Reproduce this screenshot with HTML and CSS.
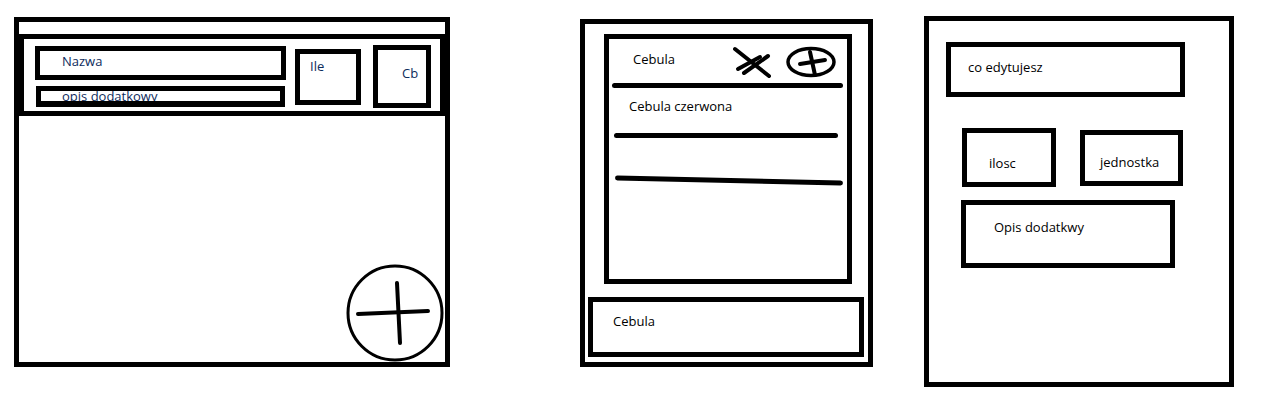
FILE: index.html
```html
<!DOCTYPE html>
<html lang="pl">
<head>
  <meta charset="UTF-8">
  <meta name="viewport" content="width=device-width, initial-scale=1.0">
  <title>Szkic - lista zakupow</title>
  <link rel="stylesheet" href="styles.css">
</head>
<body>
  <!-- Ekran 1: lista produktow -->
  <section class="panel panel-list">
    <div class="product-row">
      <div class="product-main">
        <div class="box field-name"><span class="label">Nazwa</span></div>
        <div class="box field-desc"><span class="label">opis dodatkowy</span></div>
      </div>
      <div class="box field-qty"><span class="label">Ile</span></div>
      <div class="box field-check"><span class="label">Cb</span></div>
    </div>

    <!-- Przycisk dodawania -->
    <svg class="fab" width="100" height="102" viewBox="0 0 100 102">
      <circle cx="50" cy="51" r="47" fill="none" stroke="#000" stroke-width="3"/>
      <path d="M13 52 L83 49" stroke="#000" stroke-width="4" stroke-linecap="round"/>
      <path d="M52 21 L55 81" stroke="#000" stroke-width="4" stroke-linecap="round"/>
    </svg>
  </section>

  <!-- Ekran 2: wybor produktu -->
  <section class="panel panel-pick">
    <div class="box pick-list">
      <div class="pick-head">
        <span class="label">Cebula</span>
        <svg class="head-icons" width="110" height="36" viewBox="0 0 110 36">
          <g stroke="#000" stroke-width="4" stroke-linecap="round" fill="none">
            <path d="M6 4 L40 31"/>
            <path d="M9 24 L31 12"/>
            <path d="M15 28 L39 11"/>
            <ellipse cx="82" cy="17" rx="23" ry="13.5" stroke-width="3.5"/>
            <path d="M71 19 L96 15"/>
            <path d="M81 7 L86 30"/>
          </g>
        </svg>
      </div>
      <div class="rule rule-head"></div>
      <div class="pick-item"><span class="label">Cebula czerwona</span></div>
      <div class="rule rule-mid"></div>
      <div class="pick-item empty"></div>
      <div class="rule rule-slant"></div>
    </div>
    <div class="box pick-current"><span class="label">Cebula</span></div>
  </section>

  <!-- Ekran 3: edycja -->
  <section class="panel panel-edit">
    <div class="box edit-title"><span class="label">co edytujesz</span></div>
    <div class="edit-row">
      <div class="box edit-qty"><span class="label">ilosc</span></div>
      <div class="box edit-unit"><span class="label">jednostka</span></div>
    </div>
    <div class="box edit-desc"><span class="label">Opis dodatkwy</span></div>
  </section>
</body>
</html>
```

FILE: styles.css
```css
/* General */
* {
  box-sizing: border-box;
}

body {
  margin: 0;
  background: #fff;
  font-family: "Open Sans", "Noto Sans", sans-serif;
  font-size: 13px;
  line-height: 16px;
  color: #000;
  display: flex;
  align-items: flex-start;
}

.label {
  display: block;
  white-space: nowrap;
}

.box {
  border: 5px solid #000;
  background: #fff;
}

.panel {
  border: 5px solid #000;
  flex: none;
}

/* Panel 1 */
.panel-list {
  position: relative;
  width: 436px;
  height: 350px;
  margin: 17px 0 0 14px;
  color: #0d2b5c;
}

.product-row {
  display: flex;
  align-items: flex-start;
  height: 82px;
  margin-top: 12px;
  padding-left: 11px;
  border: 5px solid #000;
}

.product-main {
  width: 251px;
}

.field-name {
  height: 34px;
  margin-top: 7px;
  padding: 2px 0 0 22px;
}

.field-desc {
  width: 249px;
  height: 21px;
  margin: 6px 0 0 1px;
  padding-left: 21px;
  border-bottom-width: 6px;
  overflow: hidden;
}

.field-desc .label {
  line-height: 10px;
}

.field-qty {
  width: 66px;
  height: 56px;
  margin: 10px 0 0 9px;
  padding: 4px 0 0 10px;
}

.field-check {
  width: 58px;
  height: 63px;
  margin: 6px 0 0 12px;
  padding: 15px 0 0 24px;
}

.fab {
  position: absolute;
  left: 326px;
  top: 240px;
}

/* Panel 2 */
.panel-pick {
  width: 293px;
  height: 348px;
  margin: 19px 0 0 130px;
}

.pick-list {
  width: 248px;
  height: 250px;
  margin: 10px 0 0 19px;
}

.pick-head {
  display: flex;
  align-items: flex-start;
  height: 44px;
}

.pick-head .label {
  margin: 12px 0 0 24px;
}

.head-icons {
  margin: 6px 8px 0 auto;
}

.rule {
  height: 5px;
  background: #000;
  border-radius: 3px;
}

.rule-head {
  width: 231px;
  margin-left: 3px;
}

.rule-mid {
  width: 224px;
  margin-left: 5px;
}

.rule-slant {
  width: 228px;
  margin-left: 6px;
  transform: rotate(1.25deg);
}

.pick-item {
  height: 45px;
  padding: 10px 0 0 20px;
}

.pick-item.empty {
  height: 40px;
}

.pick-current {
  width: 276px;
  height: 60px;
  margin: 13px 0 0 3px;
  padding: 11px 0 0 20px;
}

/* Panel 3 */
.panel-edit {
  width: 310px;
  height: 371px;
  margin: 16px 0 0 51px;
}

.edit-title {
  width: 239px;
  height: 55px;
  margin: 21px 0 0 17px;
  padding: 12px 0 0 17px;
}

.edit-row {
  display: flex;
  align-items: flex-start;
  margin-top: 31px;
}

.edit-qty {
  width: 94px;
  height: 59px;
  margin-left: 33px;
  padding: 22px 0 0 22px;
}

.edit-unit {
  width: 103px;
  height: 56px;
  margin: 2px 0 0 24px;
  padding: 19px 0 0 15px;
}

.edit-desc {
  width: 214px;
  height: 68px;
  margin: 13px 0 0 32px;
  padding: 14px 0 0 28px;
}
```
